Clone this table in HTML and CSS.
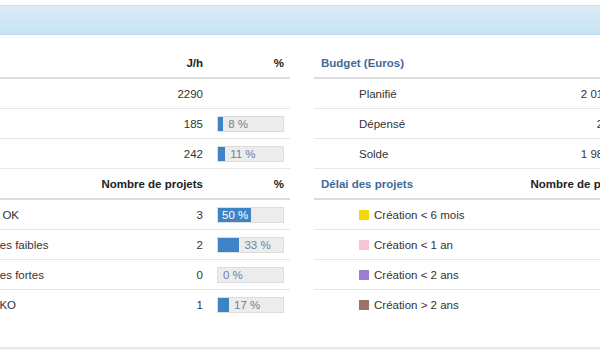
FILE: index.html
```html
<!DOCTYPE html>
<html lang="fr">
<head>
<meta charset="utf-8">
<title>Tableau de bord</title>
<link rel="stylesheet" href="styles.css">
</head>
<body>
<div class="page">
  <div class="topbar"></div>
  <div class="tables">
    <div class="tbl tbl-left">
      <div class="row head">
        <span class="cell title"></span>
        <span class="cell num">J/h</span>
        <span class="cell pct">%</span>
      </div>
      <div class="row">
        <span class="cell lbl"></span>
        <span class="cell num">2290</span>
        <span class="cell pct"></span>
      </div>
      <div class="row">
        <span class="cell lbl"></span>
        <span class="cell num">185</span>
        <span class="cell pct"><span class="meter"><span class="fill" style="width:8%"></span><span class="mtext">8 %</span></span></span>
      </div>
      <div class="row">
        <span class="cell lbl"></span>
        <span class="cell num">242</span>
        <span class="cell pct"><span class="meter"><span class="fill" style="width:11%"></span><span class="mtext">11 %</span></span></span>
      </div>
      <div class="row head">
        <span class="cell title"></span>
        <span class="cell num">Nombre de projets</span>
        <span class="cell pct">%</span>
      </div>
      <div class="row">
        <span class="cell lbl">Délai OK</span>
        <span class="cell num">3</span>
        <span class="cell pct"><span class="meter"><span class="fill" style="width:50%"><span class="mtext in">50 %</span></span></span></span>
      </div>
      <div class="row">
        <span class="cell lbl">Dérives faibles</span>
        <span class="cell num">2</span>
        <span class="cell pct"><span class="meter"><span class="fill" style="width:33%"></span><span class="mtext">33 %</span></span></span>
      </div>
      <div class="row">
        <span class="cell lbl">Dérives fortes</span>
        <span class="cell num">0</span>
        <span class="cell pct"><span class="meter"><span class="fill" style="width:0%"></span><span class="mtext">0 %</span></span></span>
      </div>
      <div class="row last">
        <span class="cell lbl lbl-ko">Délai KO</span>
        <span class="cell num">1</span>
        <span class="cell pct"><span class="meter"><span class="fill" style="width:17%"></span><span class="mtext">17 %</span></span></span>
      </div>
    </div>

    <div class="tbl tbl-right">
      <div class="row head">
        <span class="cell title blue">Budget (Euros)</span>
        <span class="cell num"></span>
        <span class="cell pct"></span>
      </div>
      <div class="row">
        <span class="cell lbl">Planifié</span>
        <span class="cell num">2 010 000</span>
        <span class="cell pct"></span>
      </div>
      <div class="row">
        <span class="cell lbl">Dépensé</span>
        <span class="cell num">25 000</span>
        <span class="cell pct"></span>
      </div>
      <div class="row">
        <span class="cell lbl">Solde</span>
        <span class="cell num">1 985 000</span>
        <span class="cell pct"></span>
      </div>
      <div class="row head">
        <span class="cell title blue">Délai des projets</span>
        <span class="cell num">Nombre de projets</span>
        <span class="cell pct">%</span>
      </div>
      <div class="row">
        <span class="cell lbl"><span class="sq sq-yellow"></span>Création &lt; 6 mois</span>
        <span class="cell num">2</span>
        <span class="cell pct"></span>
      </div>
      <div class="row">
        <span class="cell lbl"><span class="sq sq-pink"></span>Création &lt; 1 an</span>
        <span class="cell num">1</span>
        <span class="cell pct"></span>
      </div>
      <div class="row">
        <span class="cell lbl"><span class="sq sq-purple"></span>Création &lt; 2 ans</span>
        <span class="cell num">2</span>
        <span class="cell pct"></span>
      </div>
      <div class="row last">
        <span class="cell lbl"><span class="sq sq-brown"></span>Création &gt; 2 ans</span>
        <span class="cell num">1</span>
        <span class="cell pct"></span>
      </div>
    </div>
  </div>
  <div class="bottombar"></div>
</div>
</body>
</html>
```
FILE: styles.css
```css
html, body {
  margin: 0;
  padding: 0;
  background: #ffffff;
  overflow: hidden;
}
body {
  font-family: "Liberation Sans", Arial, sans-serif;
  font-size: 11.5px;
  color: #333333;
}
.page {
  width: 820px;
  margin-left: -72px;
  padding-top: 5px;
}
.topbar {
  height: 30px;
  box-sizing: border-box;
  border-top: 1px solid #cfe2ec;
  border-bottom: 1px solid #bfdcec;
  background: linear-gradient(#dbedf7, #c5e3f3);
}
.tables {
  display: flex;
  gap: 24px;
  margin-top: 13px;
  align-items: flex-start;
}
.tbl-left { width: 362px; }
.tbl-right { width: 406px; }
.row {
  display: grid;
  height: 30px;
  box-sizing: border-box;
  border-bottom: 1px solid #e7e7e7;
  align-items: center;
}
.tbl-left .row { grid-template-columns: 163px 120px 79px; }
.tbl-right .row { grid-template-columns: 198px 128px 80px; }
.row.head {
  height: 31px;
  border-bottom: 2px solid #dddddd;
  font-weight: bold;
  color: #222222;
}
.row.last { border-bottom: none; }
.cell { white-space: nowrap; }
.title { padding-left: 7px; }
.title.blue { color: #3f6a96; }
.lbl {
  padding-left: 45px;
  display: flex;
  align-items: center;
}
.lbl-ko { padding-left: 42px; }
.num {
  text-align: right;
  padding-right: 8px;
}
.pct {
  text-align: right;
  padding-right: 6px;
  padding-left: 6px;
  display: flex;
  justify-content: flex-end;
}
.meter {
  width: 67px;
  height: 16px;
  box-sizing: border-box;
  background: #ececec;
  border: 1px solid #dddddd;
  display: flex;
  align-items: stretch;
  text-align: left;
}
.fill {
  background: #3d84c6;
  display: flex;
  align-items: center;
  flex: none;
}
.mtext {
  color: #6883a1;
  margin-left: 5px;
  line-height: 14px;
  font-size: 11.5px;
}
.mtext.in {
  color: #ffffff;
  margin-left: 4px;
}
.sq {
  width: 10px;
  height: 10px;
  margin-right: 5px;
  flex: none;
}
.sq-yellow { background: #f4d80c; }
.sq-pink { background: #f8c6d2; }
.sq-purple { background: #9b80d2; }
.sq-brown { background: #9b7264; }
.bottombar {
  margin-top: 27px;
  height: 20px;
  border-top: 1px solid #d9e9f3;
  background: #e7f2f9;
}
```
